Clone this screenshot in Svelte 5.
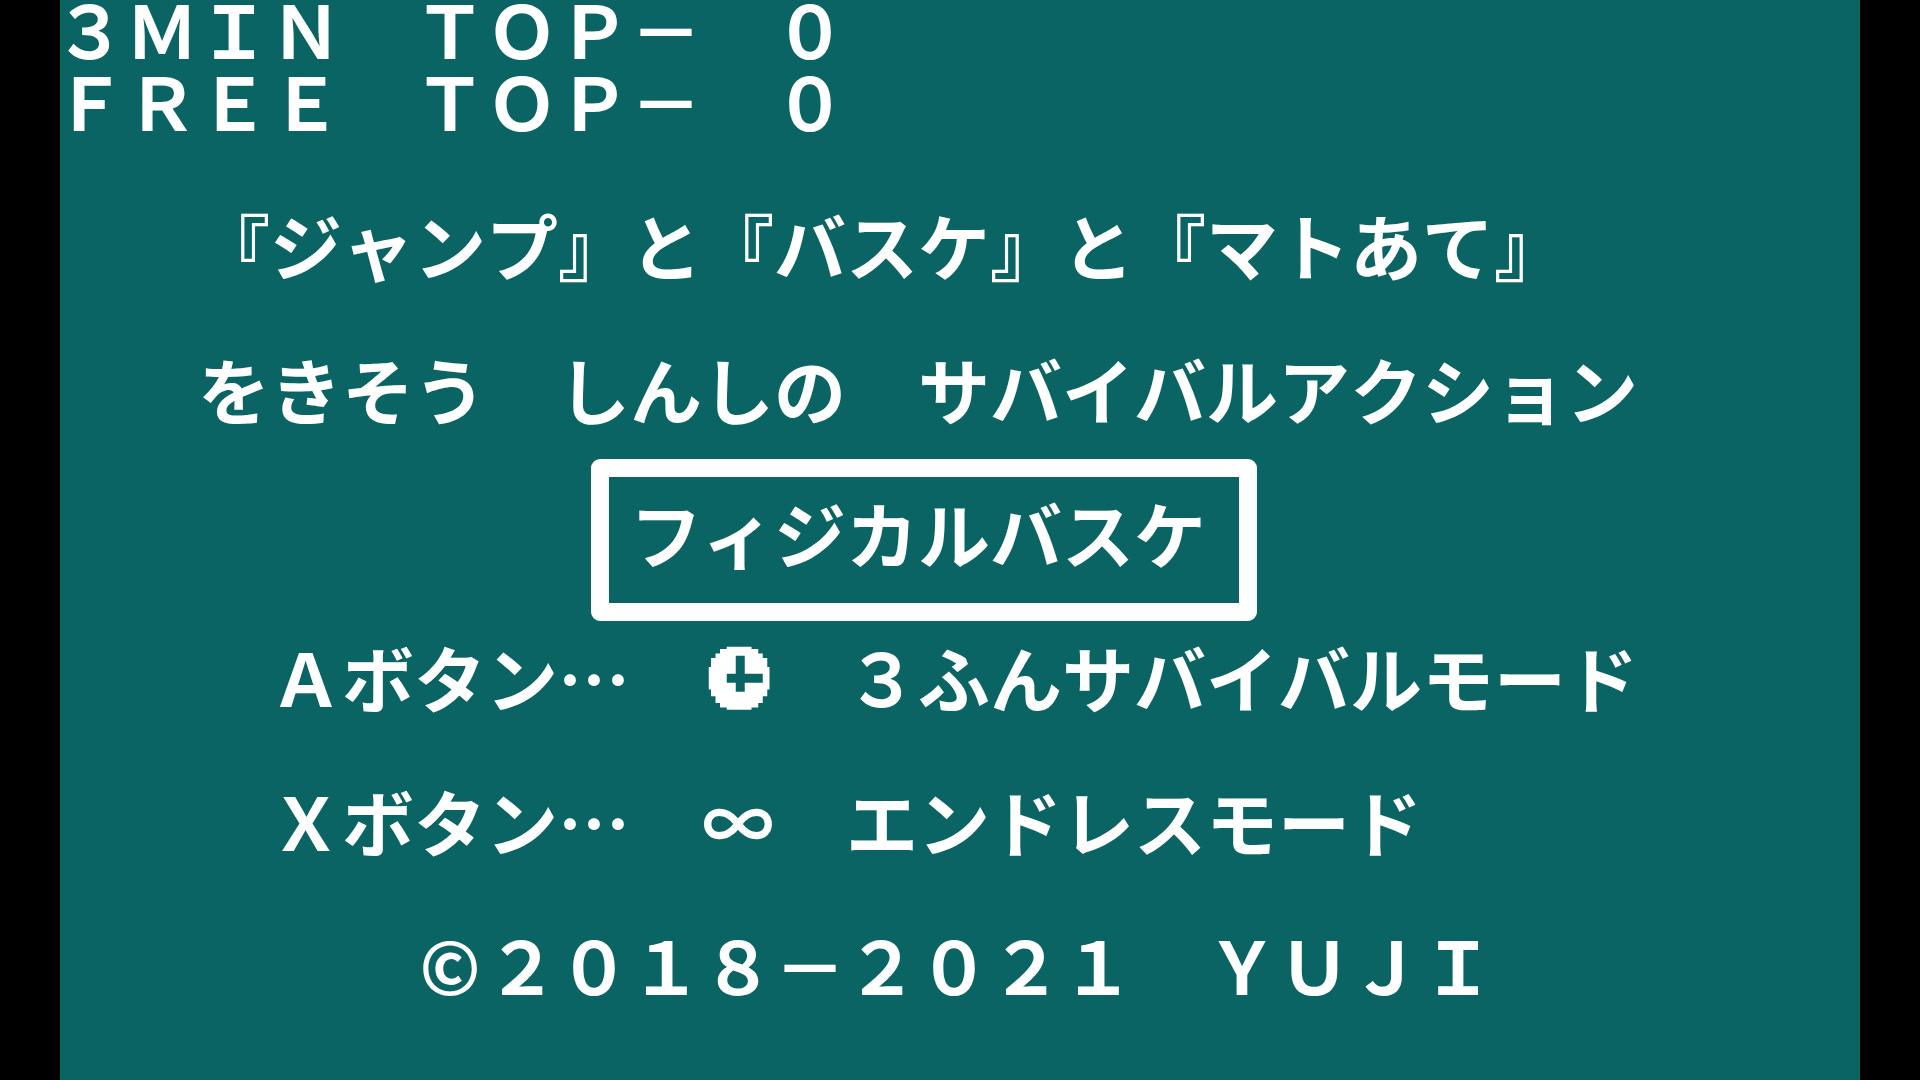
<script>
    // the console draws every glyph in one full-width cell
    const wide = (text) =>
        text
            .replace(/[!-~]/g, (c) => String.fromCharCode(c.charCodeAt(0) + 0xfee0))
            .replace(/ /g, '\u3000');

    const scores = ['3MIN TOP- 0', 'FREE TOP- 0'];
    const intro = ['『ジャンプ』と『バスケ』と『マトあて』', 'をきそう しんしの サバイバルアクション'];
    const title = 'フィジカルバスケ';
</script>

<main class="screen" lang="ja">
    <header class="scores">
        {#each scores as score}
            <p class="line">{wide(score)}</p>
        {/each}
    </header>

    <section class="intro">
        {#each intro as text}
            <p class="line">{wide(text)}</p>
        {/each}
    </section>

    <h1 class="line title">{title}</h1>

    <section class="modes">
        <p class="line">
            <span>{wide('Aボタン… ')}</span>
            <svg class="cell" viewBox="0 0 32 32" aria-hidden="true">
                <path
                    fill="currentColor"
                    fill-rule="evenodd"
                    d="M11 3h11v1h3v2h2v2h2v4h1v10h-1v3h-2v3h-2v2h-3v1H11v-1H8v-2H6v-3H4v-3H3V12h1V8h2V6h2V4h3zM15 7v8h-4v4h4v4h4v-4h8v-4h-8V7z"
                />
            </svg>
            <span>{wide(' 3ふんサバイバルモード')}</span>
        </p>
        <p class="line">
            <span>{wide('Xボタン… ')}</span>
            <span class="cell">∞</span>
            <span>{wide(' エンドレスモード')}</span>
        </p>
    </section>

    <footer class="line credit">
        <span class="cell">©</span>
        <span>{wide('2018-2021 YUJI')}</span>
    </footer>
</main>

<style>
    :global(body) {
        background: #000;
    }
    .screen {
        min-height: 100vh;
        box-sizing: border-box;
        margin: 0 60px;
        display: flow-root;
        background: #0a6463;
        color: #fff;
        font-family: 'Noto Sans CJK JP', sans-serif;
        font-kerning: none;
    }
    .line {
        display: flex;
        margin: 0;
        height: 72px;
        line-height: 72px;
        font-size: 72px;
        font-weight: 700;
        white-space: pre;
    }
    .cell {
        width: 72px;
        height: 72px;
        text-align: center;
    }
    .scores {
        margin: -8px 0 0 -6px;
    }
    .intro {
        display: grid;
        gap: 72px;
        margin-top: 72px;
        padding-left: 138px;
    }
    .title {
        width: max-content;
        margin: 35px 0 0 531px;
        padding: 19px 33px 35px 21px;
        border: 18px solid #fff;
        border-radius: 9px;
    }
    .modes {
        display: grid;
        gap: 72px;
        margin-top: 19px;
        padding-left: 210px;
    }
    .credit {
        margin-top: 72px;
        padding-left: 354px;
    }
</style>
